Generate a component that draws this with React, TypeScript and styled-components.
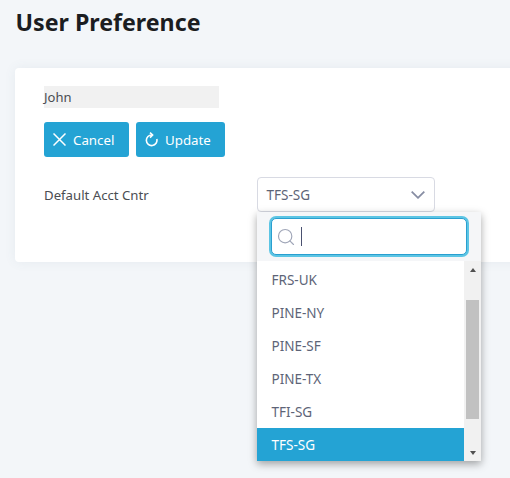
import styled, { createGlobalStyle } from 'styled-components';
import { Search } from 'lucide-react';

const GlobalStyle = createGlobalStyle`
  html, body {
    margin: 0;
    height: 100%;
    overflow: hidden;
    background: #f3f6f9;
    font-family: "Noto Sans", "Open Sans", sans-serif;
  }
`;

const Page = styled.div`
  width: 510px;
  height: 478px;
  overflow: hidden;
`;

const Title = styled.h1`
  margin: 0;
  padding: 7px 0 0 15.5px;
  height: 68px;
  box-sizing: border-box;
  font-size: 23.2px;
  line-height: 30px;
  font-weight: 700;
  color: #1b1d21;
`;

const Card = styled.div`
  margin-left: 15px;
  width: 560px;
  height: 194px;
  box-sizing: border-box;
  padding: 18px 29px;
  background: #fff;
  border-radius: 4px;
  box-shadow: 0 0 12px rgba(80, 100, 130, 0.08);
`;

const NameField = styled.div`
  width: 175px;
  height: 22px;
  background: #f1f1f1;
  font-size: 13px;
  line-height: 22px;
  color: #4a4d52;
`;

const Actions = styled.div`
  display: flex;
  gap: 7px;
  margin-top: 14px;
`;

const Button = styled.button<{ $width: number }>`
  display: flex;
  align-items: center;
  gap: 7px;
  width: ${p => p.$width}px;
  height: 35px;
  padding: 0 0 0 9px;
  border: 0;
  border-radius: 3px;
  background: #24a3d4;
  color: #fff;
  font-family: inherit;
  font-size: 13.3px;
`;

const Row = styled.div`
  display: flex;
  align-items: center;
  margin-top: 20px;
`;

const Label = styled.div`
  width: 213px;
  padding-top: 1px;
  font-size: 13.2px;
  color: #4a4d52;
`;

const SelectWrap = styled.div`
  position: relative;
  width: 178px;
`;

const SelectBox = styled.div`
  display: flex;
  align-items: center;
  justify-content: space-between;
  height: 35px;
  box-sizing: border-box;
  padding: 0 9px 0 8.5px;
  border: 1px solid #d8dae3;
  border-radius: 4px;
  font-size: 13.5px;
  color: #5d6477;
  background: #fff;
`;

const Dropdown = styled.div`
  position: absolute;
  top: 35px;
  left: 0;
  width: 224px;
  height: 249px;
  background: #fff;
  box-shadow: 0 3px 8px rgba(0, 0, 0, 0.35);
  display: flex;
  flex-direction: column;
`;

const SearchArea = styled.div`
  height: 49px;
  flex: none;
  box-sizing: border-box;
  padding: 6px 14px;
  background: #f5f6f8;
`;

const SearchBox = styled.div`
  display: flex;
  align-items: center;
  height: 37px;
  box-sizing: border-box;
  padding-left: 4px;
  gap: 5px;
  background: #fff;
  border: 1px solid #2a9fd0;
  border-radius: 5px;
  box-shadow: 0 0 0 2px #5cc5e4;
`;

const Caret = styled.span`
  width: 1px;
  height: 19px;
  background: #4a5170;
`;

const ListArea = styled.div`
  flex: 1;
  display: flex;
  min-height: 0;
`;

const List = styled.div`
  flex: 1;
  padding-top: 2px;
`;

const Item = styled.div<{ $selected?: boolean }>`
  height: 33px;
  line-height: 35px;
  padding-left: 14.5px;
  font-size: 13.5px;
  color: ${p => (p.$selected ? '#fff' : '#5d6477')};
  background: ${p => (p.$selected ? '#24a3d4' : 'transparent')};
`;

const Scrollbar = styled.div`
  width: 17px;
  flex: none;
  display: flex;
  flex-direction: column;
  background: #f1f1f1;
`;

const Arrow = styled.div<{ $down?: boolean }>`
  height: 17px;
  flex: none;
  display: flex;
  align-items: center;
  justify-content: center;
  &::before {
    content: '';
    border-left: 3.5px solid transparent;
    border-right: 3.5px solid transparent;
    ${p =>
      p.$down
        ? 'border-top: 4px solid #505050;'
        : 'border-bottom: 4px solid #505050;'}
  }
`;

const Thumb = styled.div`
  width: 13px;
  flex: none;
  height: 119px;
  margin: 22px 2px 25px 2px;
  background: #c1c1c1;
`;

const items = ['FRS-UK', 'PINE-NY', 'PINE-SF', 'PINE-TX', 'TFI-SG', 'TFS-SG'];

const CloseIcon = () => (
  <svg width="13" height="13" viewBox="0 0 13 13" fill="none" stroke="#fff" strokeWidth="1.5">
    <path d="M0.5 0.5 L12.5 12.5 M12.5 0.5 L0.5 12.5" />
  </svg>
);

const RefreshIcon = () => (
  <svg width="13" height="15" viewBox="0 0 13 15" fill="none" stroke="#fff" strokeWidth="1.6">
    <path d="M7 3 A5.3 5.3 0 1 0 11.8 7" />
    <path d="M5 0.6 L7.6 3 L5 5.6" />
  </svg>
);

const ChevronIcon = () => (
  <svg width="14" height="8" viewBox="0 0 14 8" fill="none" stroke="#878da3" strokeWidth="1.8">
    <path d="M0.7 0.7 L7 6.8 L13.3 0.7" />
  </svg>
);

export default function App() {
  return (
    <Page>
      <GlobalStyle />
      <Title>User Preference</Title>
      <Card>
        <NameField>John</NameField>
        <Actions>
          <Button $width={85}>
            <CloseIcon />
            Cancel
          </Button>
          <Button $width={89}>
            <RefreshIcon />
            Update
          </Button>
        </Actions>
        <Row>
          <Label>Default Acct Cntr</Label>
          <SelectWrap>
            <SelectBox>
              TFS-SG
              <ChevronIcon />
            </SelectBox>
            <Dropdown>
              <SearchArea>
                <SearchBox>
                  <Search size={20} strokeWidth={1.4} color="#a0a6b8" />
                  <Caret />
                </SearchBox>
              </SearchArea>
              <ListArea>
                <List>
                  {items.map(name => (
                    <Item key={name} $selected={name === 'TFS-SG'}>
                      {name}
                    </Item>
                  ))}
                </List>
                <Scrollbar>
                  <Arrow />
                  <Thumb />
                  <Arrow $down />
                </Scrollbar>
              </ListArea>
            </Dropdown>
          </SelectWrap>
        </Row>
      </Card>
    </Page>
  );
}
